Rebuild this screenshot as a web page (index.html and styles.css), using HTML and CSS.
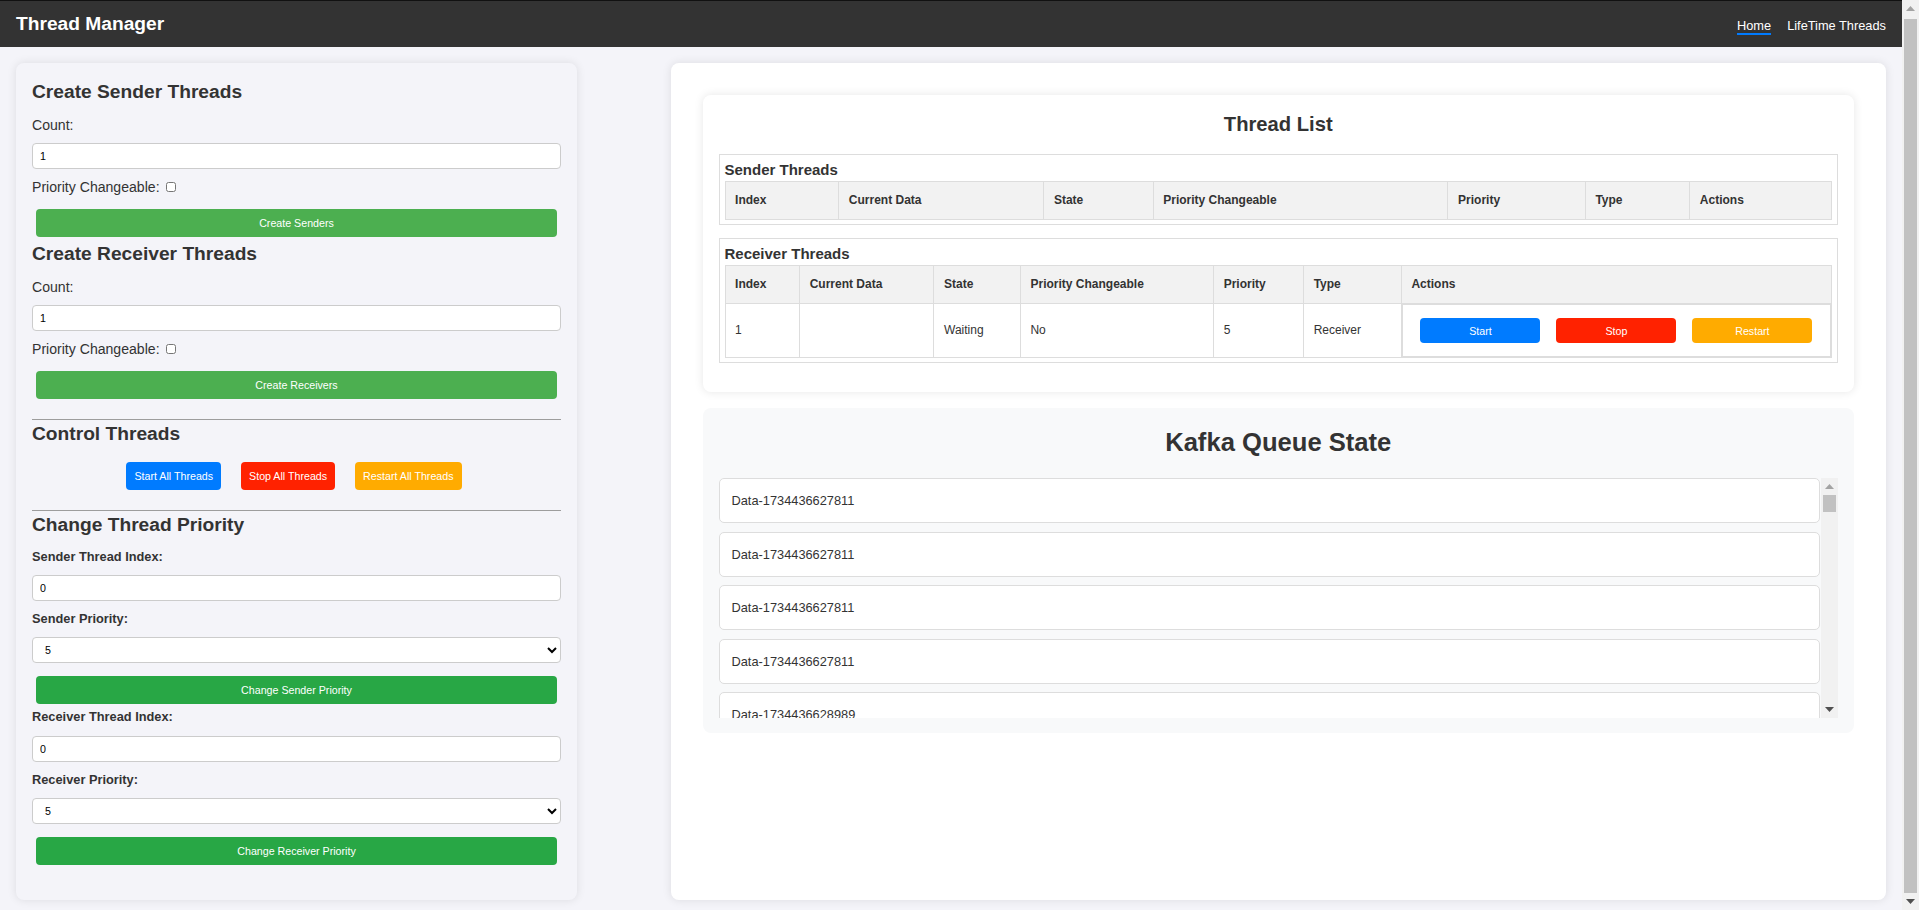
FILE: index.html
```html
<!DOCTYPE html>
<html lang="en">
<head>
<meta charset="utf-8">
<title>Thread Manager</title>
<link rel="stylesheet" href="styles.css">
</head>
<body>
<div class="page">
  <nav class="navbar">
    <div class="brand">Thread Manager</div>
    <div class="nav-links">
      <a class="nav-link active" href="#">Home</a>
      <a class="nav-link" href="#">LifeTime Threads</a>
    </div>
  </nav>

  <main class="container">
    <section class="panel side">
      <h2 class="sec-title">Create Sender Threads</h2>
      <label class="lbl g14">Count:</label>
      <input class="field g10" type="number" value="1">
      <label class="lbl chk g10"><span>Priority Changeable:</span><input type="checkbox" class="cb"></label>
      <button class="btn full green g14">Create Senders</button>

      <h2 class="sec-title g6">Create Receiver Threads</h2>
      <label class="lbl g14">Count:</label>
      <input class="field g10" type="number" value="1">
      <label class="lbl chk g10"><span>Priority Changeable:</span><input type="checkbox" class="cb"></label>
      <button class="btn full green g14">Create Receivers</button>

      <hr class="rule g20">
      <h2 class="sec-title g3">Control Threads</h2>
      <div class="ctrl-row">
        <button class="btn small blue">Start All Threads</button>
        <button class="btn small red">Stop All Threads</button>
        <button class="btn small orange">Restart All Threads</button>
      </div>
      <hr class="rule g20">
      <h2 class="sec-title g3">Change Thread Priority</h2>
      <label class="lbl strong g12">Sender Thread Index:</label>
      <input class="field g11" type="number" value="0">
      <label class="lbl strong g10">Sender Priority:</label>
      <select class="field g11"><option>5</option></select>
      <button class="btn full green2 g13">Change Sender Priority</button>
      <label class="lbl strong g5">Receiver Thread Index:</label>
      <input class="field g12b" type="number" value="0">
      <label class="lbl strong g10">Receiver Priority:</label>
      <select class="field g11"><option>5</option></select>
      <button class="btn full green2 g13">Change Receiver Priority</button>
    </section>

    <section class="panel main">
      <div class="card list-card">
        <h2 class="card-title">Thread List</h2>
        <div class="group">
          <h3 class="group-title">Sender Threads</h3>
          <table class="grid">
            <thead>
              <tr><th>Index</th><th>Current Data</th><th>State</th><th>Priority Changeable</th><th>Priority</th><th>Type</th><th>Actions</th></tr>
            </thead>
            <tbody></tbody>
          </table>
        </div>
        <div class="group">
          <h3 class="group-title">Receiver Threads</h3>
          <table class="grid">
            <thead>
              <tr><th>Index</th><th>Current Data</th><th>State</th><th>Priority Changeable</th><th>Priority</th><th>Type</th><th class="act-col">Actions</th></tr>
            </thead>
            <tbody>
              <tr>
                <td>1</td><td></td><td>Waiting</td><td>No</td><td>5</td><td>Receiver</td>
                <td class="act-cell"><div class="act-box">
                  <button class="btn row-btn blue">Start</button>
                  <button class="btn row-btn red">Stop</button>
                  <button class="btn row-btn orange">Restart</button>
                </div></td>
              </tr>
            </tbody>
          </table>
        </div>
      </div>

      <div class="card queue-card">
        <h2 class="queue-title">Kafka Queue State</h2>
        <div class="queue-wrap">
          <div class="queue">
            <div class="q-item">Data-1734436627811</div>
            <div class="q-item">Data-1734436627811</div>
            <div class="q-item">Data-1734436627811</div>
            <div class="q-item">Data-1734436627811</div>
            <div class="q-item">Data-1734436628989</div>
            <div class="q-item">Data-1734436628989</div>
            <div class="q-item">Data-1734436628989</div>
            <div class="q-item">Data-1734436628989</div>
            <div class="q-item">Data-1734436630154</div>
            <div class="q-item">Data-1734436630154</div>
          </div>
          <div class="vbar">
            <span class="sb-arrow"><svg width="9" height="5" viewBox="0 0 9 5"><path d="M0 5 L4.5 0 L9 5 Z" fill="#a3a3a3"/></svg></span>
            <span class="sb-thumb short"></span>
            <span class="sb-space"></span>
            <span class="sb-arrow"><svg width="9" height="5" viewBox="0 0 9 5"><path d="M0 0 L4.5 5 L9 0 Z" fill="#505050"/></svg></span>
          </div>
        </div>
      </div>
    </section>
  </main>
</div>
<div class="vbar page-bar">
  <span class="sb-arrow"><svg width="9" height="5" viewBox="0 0 9 5"><path d="M0 5 L4.5 0 L9 5 Z" fill="#a3a3a3"/></svg></span>
  <span class="sb-thumb long"></span>
  <span class="sb-arrow"><svg width="9" height="5" viewBox="0 0 9 5"><path d="M0 0 L4.5 5 L9 0 Z" fill="#505050"/></svg></span>
</div>
</body>
</html>
```

FILE: styles.css
```css
* { box-sizing: border-box; }

html, body {
  margin: 0;
  padding: 0;
}

body {
  background: #f4f4f9;
  color: #333;
  font-family: "Liberation Sans", Arial, sans-serif;
  display: flex;
  height: 100vh;
  overflow: hidden;
}

.page {
  flex: 1 1 auto;
  min-width: 0;
  height: 100vh;
  overflow: hidden;
}

/* ---------- scrollbars (drawn) ---------- */
.vbar {
  flex: 0 0 17px;
  width: 17px;
  background: #f1f1f1;
  display: flex;
  flex-direction: column;
  align-items: center;
}

.sb-arrow {
  flex: 0 0 17px;
  width: 100%;
  display: flex;
  align-items: center;
  justify-content: center;
}

.sb-arrow svg {
  display: block;
}

.sb-thumb {
  width: 13px;
  background: #c1c1c1;
}

.sb-thumb.long {
  flex: 1 1 auto;
  margin-top: 2px;
}

.sb-thumb.short {
  flex: 0 0 17px;
  margin-top: 0;
}

.sb-space {
  flex: 1 1 auto;
}

/* ---------- navbar ---------- */
.navbar {
  height: 47px;
  background: #333;
  border-top: 1px solid #111;
  display: flex;
  align-items: center;
  justify-content: space-between;
  padding: 0 16px;
}

.brand {
  color: #fff;
  font-size: 19.2px;
  font-weight: bold;
  line-height: 22px;
}

.nav-links {
  display: flex;
  gap: 16px;
  padding-top: 4px;
}

.nav-link {
  color: #fff;
  text-decoration: none;
  font-size: 12.8px;
  line-height: 15px;
  border-bottom: 2px solid transparent;
}

.nav-link.active {
  border-bottom-color: #007bff;
}

/* ---------- layout ---------- */
.container {
  display: flex;
  justify-content: space-between;
  align-items: stretch;
  padding: 16px 16px 16px;
}

.panel {
  border-radius: 8px;
  box-shadow: 0 0 10px rgba(0, 0, 0, 0.1);
}

.side {
  flex: 0 0 30%;
  background: #f4f4f9;
  padding: 18px 16px 35px;
  display: flex;
  flex-direction: column;
  align-items: stretch;
}

.main {
  flex: 0 0 65%;
  background: #fff;
  padding: 32px;
}

/* ---------- left panel ---------- */
.sec-title {
  margin: 0;
  font-size: 19.2px;
  line-height: 22px;
  font-weight: bold;
  color: #333;
}

.lbl {
  display: block;
  font-size: 14.08px;
  line-height: 16px;
  color: #333;
}

.lbl.strong {
  font-size: 12.8px;
  font-weight: bold;
  line-height: 15px;
}

.chk {
  display: flex;
  align-items: center;
}

.cb {
  width: 10px;
  height: 10px;
  margin: 0 0 0 6px;
}

.field {
  display: block;
  width: 100%;
  height: 26px;
  border: 1px solid #ccc;
  border-radius: 4px;
  background: #fff;
  padding: 0 7px;
  font-family: "Liberation Sans", Arial, sans-serif;
  font-size: 10.67px;
  color: #000;
}

select.field {
  padding-left: 8px;
}

.g3 { margin-top: 3.4px; }
.g5 { margin-top: 5px; }
.g6 { margin-top: 6px; }
.g10 { margin-top: 10px; }
.g11 { margin-top: 11.2px; }
.g12 { margin-top: 12.5px; }
.g12b { margin-top: 11.8px; }
.g13 { margin-top: 12.7px; }
.g14 { margin-top: 14px; }
.g20 { margin-top: 20px; }

.rule {
  border: none;
  border-top: 1px solid #9d9d9d;
  height: 0;
  margin-bottom: 0;
  margin-left: 0;
  margin-right: 0;
}

.btn {
  border: none;
  color: #fff;
  font-family: "Liberation Sans", Arial, sans-serif;
  font-size: 10.67px;
  line-height: 12px;
  border-radius: 4px;
  cursor: pointer;
}

.full {
  height: 28px;
  margin-left: 4px;
  margin-right: 4px;
}

.green { background: #4caf50; }
.green2 { background: #28a745; }
.blue { background: #007bff; }
.red { background: #ff2200; }
.orange { background: #ffab00; }

.ctrl-row {
  display: flex;
  justify-content: center;
  gap: 20px;
  margin-top: 16.6px;
  padding-right: 5px;
}

.small {
  height: 28px;
  padding: 0 8px;
}

/* ---------- cards ---------- */
.card {
  border-radius: 8px;
}

.list-card {
  background: #fff;
  box-shadow: 0 0 10px rgba(0, 0, 0, 0.1);
  padding: 18px 16px 16px;
}

.card-title {
  margin: 0 0 18px;
  text-align: center;
  font-size: 20.2px;
  line-height: 23px;
  font-weight: bold;
  color: #333;
}

.group {
  border: 1px solid #ddd;
  padding: 5px 5px 4px;
  margin-bottom: 13px;
}

.group-title {
  margin: 1px 0 3px;
  font-size: 15px;
  line-height: 17px;
  font-weight: bold;
  color: #333;
}

.grid {
  width: 100%;
  border-collapse: collapse;
  font-size: 12px;
  color: #333;
}

.grid th,
.grid td {
  border: 1px solid #ddd;
  padding: 12px 9.6px;
  line-height: 13px;
  text-align: left;
}

.grid th {
  background: #f2f2f2;
  font-weight: bold;
}

.grid .act-col {
  width: 1%;
}

.grid td.act-cell {
  padding: 0;
}

.act-box {
  display: flex;
  border: 1px solid #ddd;
  padding: 13px 9.6px;
}

.row-btn {
  width: 120px;
  height: 25px;
  margin: 0 8px;
  flex: 0 0 120px;
}

/* ---------- queue ---------- */
.queue-card {
  margin-top: 16px;
  background: #f8f9fa;
  padding: 20px 16px 15px;
}

.queue-title {
  margin: 0 0 21px;
  text-align: center;
  font-size: 25.6px;
  line-height: 29px;
  font-weight: bold;
  color: #333;
}

.queue-wrap {
  display: flex;
  height: 240px;
}

.queue {
  flex: 1 1 auto;
  min-width: 0;
  overflow: hidden;
  padding-right: 1px;
}

.q-item {
  background: #fff;
  border: 1px solid #ddd;
  border-radius: 5px;
  padding: 14px 12px;
  font-size: 12.8px;
  line-height: 15px;
  color: #333;
  margin-bottom: 8.5px;
}
```
